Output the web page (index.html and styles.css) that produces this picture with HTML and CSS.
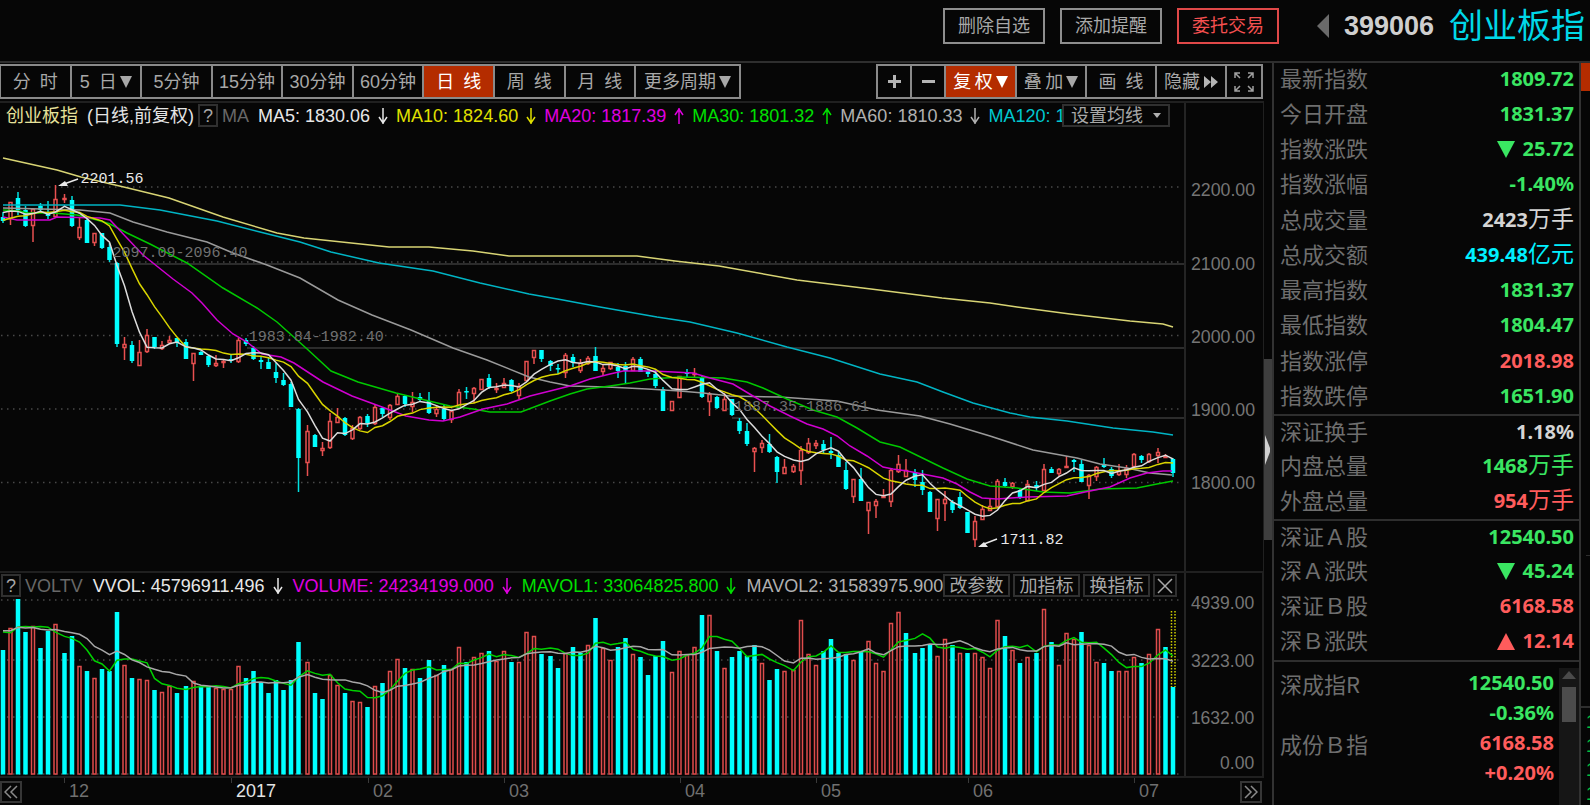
FILE: index.html
```html
<!DOCTYPE html>
<html lang="zh-CN">
<head>
<meta charset="utf-8">
<title>创业板指 399006</title>
<link rel="stylesheet" href="styles.css">
</head>
<body>
<header class="top">
  <button class="top-btn">删除自选</button>
  <button class="top-btn">添加提醒</button>
  <button class="top-btn trade">委托交易</button>
  <button class="prev" aria-label="上一个"><svg width="12" height="24" viewBox="0 0 12 24"><path d="M12 0V24L0 12Z" fill="#6a6a6a"/></svg></button>
  <span class="code">399006</span>
  <h1 class="name">创业板指</h1>
</header>
<div class="main">
  <main class="charts">
    <nav class="toolbar">
      <div class="group periods">
        <button class="tab">分&ensp;时</button>
        <button class="tab">5&ensp;日<i class="down"></i></button>
        <button class="tab">5分钟</button>
        <button class="tab">15分钟</button>
        <button class="tab">30分钟</button>
        <button class="tab">60分钟</button>
        <button class="tab on">日&ensp;线</button>
        <button class="tab">周&ensp;线</button>
        <button class="tab">月&ensp;线</button>
        <button class="tab wide">更多周期<i class="down"></i></button>
      </div>
      <div class="group">
        <button class="tab small" aria-label="放大"><svg width="13" height="13" viewBox="0 0 13 13"><path d="M6.500 0V13M0 6.500H13" stroke="#b4b4b4" stroke-width="3"/></svg></button>
        <button class="tab small" aria-label="缩小"><svg width="13" height="13" viewBox="0 0 13 13"><path d="M0 6.500H13" stroke="#b4b4b4" stroke-width="3"/></svg></button>
        <button class="tab on">复&thinsp;权<i class="down"></i></button>
        <button class="tab">叠&thinsp;加<i class="down"></i></button>
        <button class="tab">画&ensp;线</button>
        <button class="tab">隐藏<svg class="ff" width="14" height="12" viewBox="0 0 14 12"><path d="M0 0L7 6L0 12ZM7 0L14 6L7 12Z" fill="#b4b4b4"/></svg></button>
        <button class="tab small" aria-label="全屏"><svg width="20" height="20" viewBox="0 0 20 20" fill="none" stroke="#a0a0a0" stroke-width="1.500"><path d="M1 6V1H6M1 1L6 6M14 1H19V6M19 1L14 6M1 14V19H6M1 19L6 14M14 19H19V14M19 19L14 14"/></svg></button>
      </div>
    </nav>

    <section class="panel">
      <div class="plot">
        <div class="info">
          <span class="title">创业板指</span>
          <span class="sub">(日线,前复权)</span>
          <button class="help">?</button>
          <span class="ind">MA</span>
          <span class="v white">MA5: 1830.06<svg class="arr" viewBox="0 0 12 18"><use href="#dn"/></svg></span>
          <span class="v yellow">MA10: 1824.60<svg class="arr" viewBox="0 0 12 18"><use href="#dn"/></svg></span>
          <span class="v magenta">MA20: 1817.39<svg class="arr" viewBox="0 0 12 18"><use href="#up"/></svg></span>
          <span class="v lime">MA30: 1801.32<svg class="arr" viewBox="0 0 12 18"><use href="#up"/></svg></span>
          <span class="v silver">MA60: 1810.33<svg class="arr" viewBox="0 0 12 18"><use href="#dn"/></svg></span>
          <span class="v aqua">MA120: 1</span>
          <div class="tools"><button class="tool set">设置均线<i class="caret"></i></button></div>
        </div>
        <div class="canvas price-canvas">
          <svg id="price" viewBox="0 128 1184 443" preserveAspectRatio="none"></svg>
          <span class="note hi">2201.56</span>
          <span class="note lo">1711.82</span>
          <span class="note gap g1">2097.09-2096.40</span>
          <span class="note gap g2">1983.84-1982.40</span>
          <span class="note gap g3">1887.35-1886.61</span>
        </div>
      </div>
      <svg class="axis" viewBox="0 103 78 468">
        <text x="70" y="194">2200.00</text><text x="70" y="269">2100.00</text><text x="70" y="343">2000.00</text><text x="70" y="417">1900.00</text><text x="70" y="491">1800.00</text>
      </svg>
    </section>

    <section class="panel vol-panel">
      <div class="plot">
        <div class="info">
          <button class="help">?</button>
          <span class="ind">VOLTV</span>
          <span class="v white first">VVOL: 45796911.496<svg class="arr" viewBox="0 0 12 18"><use href="#dn"/></svg></span>
          <span class="v magenta">VOLUME: 24234199.000<svg class="arr" viewBox="0 0 12 18"><use href="#dn"/></svg></span>
          <span class="v lime">MAVOL1: 33064825.800<svg class="arr" viewBox="0 0 12 18"><use href="#dn"/></svg></span>
          <span class="v silver">MAVOL2: 31583975.900</span>
          <div class="tools">
            <button class="tool">改参数</button><button class="tool">加指标</button><button class="tool">换指标</button><button class="tool x" aria-label="关闭"><svg width="16" height="16" viewBox="0 0 16 16"><path d="M1 1L15 15M15 1L1 15" stroke="#a8a8a8" stroke-width="1.500"/></svg></button>
          </div>
        </div>
        <div class="canvas vol-canvas"><svg id="vol" viewBox="0 598 1184 178" preserveAspectRatio="none"></svg></div>
      </div>
      <svg class="axis boxed" viewBox="0 573 78 203">
        <text x="70" y="607">4939.00</text><text x="70" y="667">3223.00</text><text x="70" y="725">1632.00</text><text x="70" y="772">0.00</text>
      </svg>
    </section>

    <footer class="timeline">
      <button class="page" aria-label="向前"><svg width="14" height="14" viewBox="0 0 14 14"><path d="M7 1L1 7L7 13M13 1L7 7L13 13" fill="none" stroke="#8a8a8a" stroke-width="1.500"/></svg></button>
      <div class="months" id="months"></div>
      <button class="page" aria-label="向后"><svg width="14" height="14" viewBox="0 0 14 14"><path d="M1 1L7 7L1 13M7 1L13 7L7 13" fill="none" stroke="#8a8a8a" stroke-width="1.500"/></svg></button>
    </footer>
  </main>

  <div class="splitter"><div class="grip"><svg width="8" height="30" viewBox="0 0 8 30"><path d="M1 0L6 13V17L1 30Z" fill="#d0d0d0"/></svg></div></div>

  <aside class="quote">
    <table>
      <tbody>
        <tr><th>最新指数</th><td class="g">1809.72</td></tr>
        <tr><th>今日开盘</th><td class="g">1831.37</td></tr>
        <tr><th>指数涨跌</th><td class="g"><i class="tri fall"></i>25.72</td></tr>
        <tr><th>指数涨幅</th><td class="g">-1.40%</td></tr>
        <tr><th>总成交量</th><td class="w">2423<span class="unit">万手</span></td></tr>
        <tr><th>总成交额</th><td class="c">439.48<span class="unit">亿元</span></td></tr>
        <tr><th>最高指数</th><td class="g">1831.37</td></tr>
        <tr><th>最低指数</th><td class="g">1804.47</td></tr>
        <tr><th>指数涨停</th><td class="r">2018.98</td></tr>
        <tr><th>指数跌停</th><td class="g">1651.90</td></tr>
      </tbody>
      <tbody>
        <tr><th>深证换手</th><td class="w">1.18%</td></tr>
        <tr><th>内盘总量</th><td class="g">1468<span class="unit">万手</span></td></tr>
        <tr><th>外盘总量</th><td class="r">954<span class="unit">万手</span></td></tr>
      </tbody>
      <tbody>
        <tr><th>深证Ａ股</th><td class="g">12540.50</td></tr>
        <tr><th>深Ａ涨跌</th><td class="g"><i class="tri fall"></i>45.24</td></tr>
        <tr><th>深证Ｂ股</th><td class="r">6168.58</td></tr>
        <tr><th>深Ｂ涨跌</th><td class="r"><i class="tri rise"></i>12.14</td></tr>
      </tbody>
    </table>
    <div class="related">
      <table>
        <tbody>
          <tr><th>深成指R</th><td class="g">12540.50</td></tr>
          <tr><th></th><td class="g">-0.36%</td></tr>
          <tr><th>成份Ｂ指</th><td class="r">6168.58</td></tr>
          <tr><th></th><td class="r">+0.20%</td></tr>
        </tbody>
      </table>
      <div class="scroll"><i class="scroll-up"></i><div class="thumb"></div></div>
    </div>
  </aside>
  <div class="strip">
    <div class="strip-tab"></div>
    <div class="strip-mid"></div>
    <div class="strip-low"></div>
    <div class="strip-list"><span>1</span><span>1</span><span>1</span><span>1</span></div>
  </div>
</div>
<svg class="defs" width="0" height="0">
  <symbol id="dn" viewBox="0 0 12 18"><path d="M6 1V17M2 10L6 16L10 10" fill="none" stroke="currentColor" stroke-width="1.500"/></symbol>
  <symbol id="up" viewBox="0 0 12 18"><path d="M6 17V1M2 8L6 2L10 8" fill="none" stroke="currentColor" stroke-width="1.500"/></symbol>
</svg>
<script src="chart.js"></script>
</body>
</html>
```
FILE: styles.css
```css
* { box-sizing: border-box; }
body {
  margin: 0;
  min-height: 100vh;
  display: flex;
  flex-direction: column;
  overflow: hidden;
  background: #060606;
  color: #a8a8a8;
  font: 18px/24px "Liberation Sans", "Noto Sans CJK SC", sans-serif;
}
button {
  margin: 0;
  padding: 0;
  background: #060606;
  color: inherit;
  font: inherit;
  white-space: nowrap;
}
i { display: inline-block; }
.defs { position: absolute; }

.top {
  display: flex;
  align-items: center;
  justify-content: flex-end;
  height: 61px;
  padding: 0 5px 9px 0;
}
.top-btn {
  width: 102px;
  height: 36px;
  margin-right: 15px;
  border: 2px solid #8e8e8e;
}
.trade { border-color: #e04848; color: #f45050; margin-right: 38px; }
.prev { display: flex; border: 0; margin-right: 15px; }
.code { color: #cfcfcf; font-weight: bold; font-size: 27px; margin-right: 15px; }
.name { margin: 0; color: #00d8e8; font-weight: normal; font-size: 34px; line-height: 48px; }

.main { display: flex; flex: 1; border-top: 2px solid #2e2e2e; }
.charts { flex: 1; min-width: 0; display: flex; flex-direction: column; }

.toolbar {
  display: flex;
  justify-content: space-between;
  height: 40px;
  padding: 1px 1px 2px 0;
  border-bottom: 2px solid #202020;
}
.group { display: flex; border: 2px solid #8a8a8a; }
.periods { width: 741px; border-left-width: 1px; }
.tab {
  display: flex;
  align-items: center;
  justify-content: center;
  width: 70px;
  border: 0;
  border-right: 2px solid #8a8a8a;
}
.periods .tab { flex: 1; }
.tab:last-child { border-right: 0; }
.periods .wide { flex: 0 0 103px; }
.tab.small { width: 34px; }
.on { background: #b42c00; color: #fff; }
.on.tab { width: 71px; }
.down {
  margin-left: 3px;
  border: 6px solid transparent;
  border-top: 12px solid #a8a8a8;
  border-bottom: 0;
}
.on .down { border-top-color: #fff; }
.ff { margin-left: 4px; }

.panel { display: flex; height: 470px; border-bottom: 2px solid #202020; }
.vol-panel { height: 205px; }
.plot { flex: 1; min-width: 0; border-right: 2px solid #242424; }
.axis { width: 78px; height: 100%; border-right: 1px solid #202020; }
.boxed { border: 0; border-right: 2px solid #202020; }
.axis text { fill: #757575; text-anchor: end; font-size: 18px; }

.info {
  position: relative;
  display: flex;
  align-items: center;
  height: 25px;
  overflow: hidden;
  white-space: nowrap;
}
.title { color: #e6e29a; margin-left: 6px; }
.sub { color: #e4e4e4; margin-left: 9px; }
.help { width: 20px; height: 23px; margin-left: 4px; border: 2px solid #303030; line-height: 18px; }
.vol-panel .help { margin-left: 1px; }
.ind { color: #686868; margin: 0 9px 0 4px; }
.v { display: flex; align-items: center; }
.v.first { margin-left: 1px; }
.arr { width: 12px; height: 18px; margin: 0 7px; }
.vol-panel .arr { margin-right: 9px; }
.white { color: #e8e8e8; }
.yellow { color: #e0e000; }
.magenta { color: #e000e0; }
.lime { color: #00e000; }
.silver { color: #b0b0b0; }
.aqua { color: #00c8d0; }
.tools { position: absolute; right: 5px; top: 1px; display: flex; gap: 3px; background: #060606; }
.vol-panel .tools { right: 7px; }
.tool { width: 67px; height: 23px; border: 2px solid #303030; line-height: 18px; display: flex; align-items: center; justify-content: center; }
.tool.x { width: 24px; }
.tools .set { width: 108px; }
.set { margin-right: 9px; }
.caret { margin-left: 10px; border: 4px solid transparent; border-top: 5px solid #b0b0b0; border-bottom: 0; }

.canvas { position: relative; }
.canvas svg { display: block; width: 100%; height: 100%; }
.price-canvas { height: 443px; }
.vol-canvas { height: 178px; }
.note { position: absolute; font: 15px/16px "Liberation Mono", monospace; color: #e8e8e8; }
.gap { color: #707070; }
.hi { left: 6.8%; top: 44px; }
.lo { left: 84.5%; top: 405px; }
.g1 { left: 9.5%; top: 118px; }
.g2 { left: 21%; top: 202px; }
.g3 { left: 62%; top: 272px; }

.timeline { display: flex; align-items: center; height: 28px; padding-right: 2px; border-bottom: 1px solid #202020; }
.page { display: flex; align-items: center; justify-content: center; width: 22px; height: 22px; border: 2px solid #363636; }
.months { position: relative; flex: 1; height: 28px; }
.month { position: absolute; top: 0; padding: 1px 0 0 5px; color: #707070; }
.month::before { content: ""; position: absolute; left: 0; top: 0; height: 5px; width: 1px; background: #3a3a3a; }
.year { color: #e4e4e4; }

.splitter { width: 8px; padding-top: 296px; }
.grip { display: flex; align-items: center; height: 181px; background: #3e3e3e; }

.quote { width: 309px; display: flex; flex-direction: column; border: 2px solid #323232; border-top: 0; border-bottom: 0; }
table { width: 100%; border-collapse: collapse; }
tbody { border-bottom: 2px solid #2e2e2e; }
th, td { height: 35px; vertical-align: top; white-space: nowrap; }
tr:nth-child(4n) > * { height: 36px; }
th { padding: 0 0 0 6px; color: #6e6e6e; font: 22px/29px "Noto Sans CJK SC", sans-serif; text-align: left; }
td { padding: 0 5px 0 0; font: bold 20px/31px "Noto Sans", "Noto Sans CJK SC", sans-serif; text-align: right; }
.unit { font: 23px/24px "Noto Sans CJK SC", sans-serif; }
.g { color: #3ae662; }
.r { color: #ff5c5c; }
.w { color: #d4d4d4; }
.c { color: #00f0ff; }
.tri { margin-right: 8px; border: 9px solid transparent; vertical-align: -2px; }
.fall { border-top: 17px solid #3ae662; border-bottom: 0; }
.rise { border-bottom: 17px solid #ff5c5c; border-top: 0; }
.related { flex: 1; display: flex; padding-top: 6px; }
.related table { flex: 1; align-self: flex-start; }
.related tbody { border: 0; }
.related tr > * { height: 30px; line-height: 30px; }
.scroll { width: 20px; padding: 3px 3px; background: #161616; }
.scroll-up { display: block; border: 7px solid transparent; border-bottom: 8px solid #4a4a4a; border-top: 0; }
.thumb { height: 35px; margin-top: 8px; background: #4c4c4c; }

.strip { width: 9px; overflow: hidden; }
.strip-tab { height: 28px; background: #b42c00; }
.strip-mid { height: 465px; margin-left: 5px; border-bottom: 1px solid #2e2e2e; }
.strip-low { height: 152px; border-bottom: 2px solid #2e2e2e; }
.strip-list { display: flex; flex-direction: column; padding: 2px 0 0 5px; color: #00c040; }
```
FILE: chart.js
```js
// Daily candles in chart units: high, body top, body bottom, low; r = up, c = down.
const candles = `c212,217,221,223 r202,202,219,225 c192,198,210,215 c206,210,226,227 r208,209,226,242 c203,206,210,212 c201,212,216,219 r185,199,217,218
r194,198,200,203 c196,200,226,227 r217,227,238,240 c218,220,243,243 r233,233,243,246 c233,233,248,249 c243,247,260,262 c262,263,344,347
r337,344,348,360 c341,345,361,363 r340,352,366,366 r329,335,352,353 c337,337,347,349 r341,345,349,350 r336,340,343,344 c338,338,343,347
c339,342,359,359 r353,353,364,381 c351,352,355,355 c355,356,365,367 r355,363,366,367 r359,361,363,368 c355,359,360,363 r338,340,362,363
c338,340,344,346 c346,348,359,360 c356,360,362,369 c357,362,369,369 c363,372,378,383 c373,380,385,386 c382,384,407,407 c408,409,458,492
r425,431,463,476 c434,435,447,447 r442,448,451,456 r413,421,448,449 r408,417,423,423 c417,418,435,436 r425,428,439,440 r416,417,429,430
c414,416,423,427 r405,407,424,425 c407,408,414,417 r404,405,418,420 r394,396,405,405 c395,396,404,407 r392,402,407,412 c393,397,400,402
c392,401,413,414 r405,409,414,417 c405,409,419,421 r410,411,420,423 r389,392,408,409 c387,391,392,399 r387,388,394,403 r379,379,390,390
c374,378,387,389 r383,388,389,393 r378,383,388,388 c379,380,391,392 r383,386,396,399 r361,361,381,381 r350,350,358,364 c350,350,359,362
c360,361,366,371 c364,368,369,374 r353,355,373,378 c354,357,363,367 r359,363,371,373 r356,358,364,365 c347,356,371,371 r365,368,372,376
r362,362,369,370 c363,367,371,378 c362,366,371,384 r357,359,371,371 c357,359,372,372 c369,371,374,377 c369,374,386,388 c387,389,411,411
r401,401,411,411 r376,376,398,398 c369,372,374,378 r368,373,375,378 c376,377,397,398 r392,394,402,416 c396,397,408,409 r393,399,411,411
c399,399,415,416 c418,421,431,434 c423,431,444,446 r447,448,452,472 r440,443,448,453 c434,444,452,453 c456,457,472,483 r459,467,474,474
r464,466,472,473 r446,450,471,485 r438,443,453,454 r440,443,446,449 c440,444,450,454 c437,451,453,459 c452,455,467,467 c462,470,489,490
r479,479,497,503 c468,479,501,501 r502,502,511,534 r499,501,506,518 r489,496,497,498 r469,470,502,507 r455,464,472,473 r459,470,477,477
c469,472,480,487 c470,482,490,495 c491,492,512,512 r499,499,519,531 r491,499,504,521 c500,502,510,513 c492,497,508,509 c512,512,533,533
r516,521,540,547 r505,509,520,520 r499,506,511,511 r479,481,507,507 c478,482,486,487 r482,483,487,489 c488,490,498,499 r480,484,501,501
c481,485,488,491 r464,469,491,491 c467,469,473,473 r468,469,474,476 r456,466,468,468 c459,460,462,472 c460,464,482,482 r474,475,486,499
r466,467,477,481 c458,464,467,468 c467,469,476,478 r464,471,475,476 r465,468,475,478 r453,454,467,468 c455,456,460,463 r453,454,462,463
r448,452,456,463 r454,456,457,458 c458,459,473,477`.split(/\s+/).map(s => ({ up: s[0] === "r", v: s.slice(1).split(",").map(Number) }));

// Daily volume as bar height.
const volumes = `c124 r146 c175 c142 r148 c126 c143 r150 c121 c138 r108 c103 r96 c105 c103 c162 r109 c96 r95 r94 c84 r82 r88 c81 c88 r93 c87 c87 r86 r85 r85 r108
c96 c103 c91 c81 c94 c84 c94 c132 r112 c81 c75 r99 r89 c81 r73 r72 c67 r88 c91 r103 r115 c106 r105 c96 c114 r99 c109 r105 r127 c112 r117 r121
c123 r113 r123 c112 r112 r142 r138 c120 c118 c106 r121 c127 c121 r129 c156 r126 r114 c127 c136 r120 c117 c99 c118 c133 r102 r123 r119 r127 c159
r159 c123 r106 c117 c123 c118 c129 r111 c94 c105 r103 r104 r154 r120 r109 c123 c135 c121 c120 r114 c123 r133 r111 r103 r151 r162 c141 c121 c126
c129 r118 r135 c129 r121 c121 r121 r117 r106 r154 c138 r124 c111 r117 c121 r165 c132 r109 r141 r135 c142 r129 r112 c111 c103 r103 r103 r117 c111
r120 r145 c127 c87`.split(/\s+/).map(s => ({ up: s[0] === "r", h: +s.slice(1) }));

const priceSeed = [222, 230, 232, 230, 226, 210, 208, 212, 212];
const volSeed = [146, 140, 148, 145, 143, 150, 146, 140, 150];
const base = 774;

const lines = {
  "#d8d474": "3,158 57,170 81,177 128,188 169,198 223,217 277,233 304,238 389,247 429,247 473,251 509,256 637,256 675,261 719,266 797,280 871,289 942,298 990,303 1017,307 1070,314 1130,321 1163,324 1173,327",
  "#00b4c4": "3,205 120,205 160,210 217,221 260,232 300,242 331,252 379,263 433,271 480,283 529,294 563,300 600,307 657,317 690,322 737,333 787,347 830,358 880,374 917,382 943,392 973,403 1010,413 1030,417 1067,421 1113,428 1153,432 1173,435",
  "#9a9a9a": "3,208 80,210 110,213 133,222 167,232 207,242 233,253 267,265 300,278 338,300 372,315 411,330 453,348 487,360 529,377 550,382 570,386 607,387 647,389 680,391 703,393 730,396 780,397 837,401 877,410 920,416 950,424 990,436 1033,450 1077,458 1100,464 1127,468 1150,473 1172,475",
  "#00c800": "3,210 20,211 27,213 53,213 77,215 97,220 110,224 127,233 150,244 187,263 223,288 257,308 277,322 306,348 331,371 358,382 396,393 429,401 450,406 473,409 490,412 521,412 550,401 570,394 587,389 610,386 630,383 650,379 680,377 723,378 747,382 763,388 787,399 813,410 837,417 857,428 880,442 900,447 943,468 967,479 990,486 1017,488 1043,492 1070,493 1100,489 1137,488 1157,484 1173,481",
  "#d000d0": "3,217 17,220 50,220 57,217 100,218 110,220 127,238 143,255 158,267 173,279 192,293 202,303 217,320 233,334 247,342 262,354 281,357 294,363 323,382 352,396 382,407 406,416 429,420 443,421 460,417 483,409 507,404 530,396 550,391 570,386 590,379 610,374 623,371 653,371 673,372 693,373 710,378 733,384 753,396 770,406 790,416 807,424 823,429 837,436 850,446 867,456 883,467 893,469 907,471 943,478 957,484 970,492 982,498 997,499 1027,497 1067,496 1085,492 1110,487 1130,478 1147,473 1163,471 1172,471"
};

const x = i => 3 + 7.5 * i + 1.5 * Math.floor((i + 8) / 16);
const rect = (cx, y, w, h, attrs) => `<rect x="${cx - w / 2}" y="${y}" width="${w}" height="${h}" ${attrs}/>`;
const poly = (pts, color) => `<polyline points="${pts}" fill="none" stroke="${color}" stroke-width="1.5"/>`;
const dots = y => `<path d="M1 ${y}H1182" stroke="#484848" stroke-width="1.5" stroke-dasharray="1.5 4.5"/>`;
const rule = (x1, y) => `<path d="M${x1} ${y}H1184" stroke="#3a3a3a" stroke-width="1.5"/>`;
const average = (seed, vals, n) => {
  const all = seed.concat(vals);
  return vals.map((_, i) => {
    const end = i + seed.length + 1;
    return all.slice(end - n, end).reduce((a, b) => a + b, 0) / n;
  });
};
const path = (vals, color) => poly(vals.map((v, i) => `${x(i)},${v.toFixed(1)}`).join(" "), color);

let out = [187, 262, 335.5, 409, 482.5].map(dots).join("");
out += rule(110, 264) + rule(247, 348) + rule(732, 418);
candles.forEach((c, i) => {
  const [hi, top, bot, lo] = c.v, cx = x(i);
  if (c.up) {
    out += `<path d="M${cx} ${hi}V${top}M${cx} ${bot}V${lo}" stroke="#e85050" stroke-width="1.5"/>`;
    out += rect(cx, top + 0.5, 3, Math.max(bot - top - 1, 1), 'fill="#060606" stroke="#e85050" stroke-width="1.5"');
  } else {
    out += `<path d="M${cx} ${hi}V${lo}" stroke="#00e0e0" stroke-width="1.5"/>`;
    out += rect(cx, top, 4.5, Math.max(bot - top, 1.5), 'fill="#0ff"');
  }
});
for (const color in lines) out += poly(lines[color], color);
const closes = candles.map(c => c.up ? c.v[1] : c.v[2]);
out += path(average(priceSeed, closes, 10), "#d8d400");
out += path(average(priceSeed, closes, 5), "#dcdcdc");
out += '<path d="M78 179L64 184M997 539L984 544" stroke="#e8e8e8" stroke-width="1.5"/>';
out += '<path d="M58 186L65 181L68 186ZM978 547L984 542L988 547Z" fill="#e8e8e8"/>';
document.getElementById("price").innerHTML = out;

out = [600, 660, 717, 774].map(dots).join("");
volumes.forEach((v, i) => {
  out += v.up
    ? rect(x(i), base - v.h + 0.5, 3, v.h - 0.5, 'fill="#060606" stroke="#e04c4c" stroke-width="1.5"')
    : rect(x(i), base - v.h, 4.5, v.h + 0.5, 'fill="#0ff"');
});
out += '<path d="M1171.5 611V687M1175 611V687" stroke="#d0d000" stroke-width="1.5" stroke-dasharray="1.5 1.5"/>';
const heights = volumes.map(v => v.h);
out += path(average(volSeed, heights, 5).map(h => base - h), "#00d000");
out += path(average(volSeed, heights, 10).map(h => base - h), "#a8a8a8");
document.getElementById("vol").innerHTML = out;

// Month marks along the time axis, as a share of its width.
const months = document.getElementById("months");
[["12", 42], ["2017", 209], ["02", 346], ["03", 482], ["04", 658], ["05", 794], ["06", 946], ["07", 1112]].forEach(([name, at]) => {
  const el = document.createElement("span");
  el.className = name.length > 2 ? "month year" : "month";
  el.style.left = (at / 1218 * 100).toFixed(2) + "%";
  el.textContent = name;
  months.append(el);
});
```
